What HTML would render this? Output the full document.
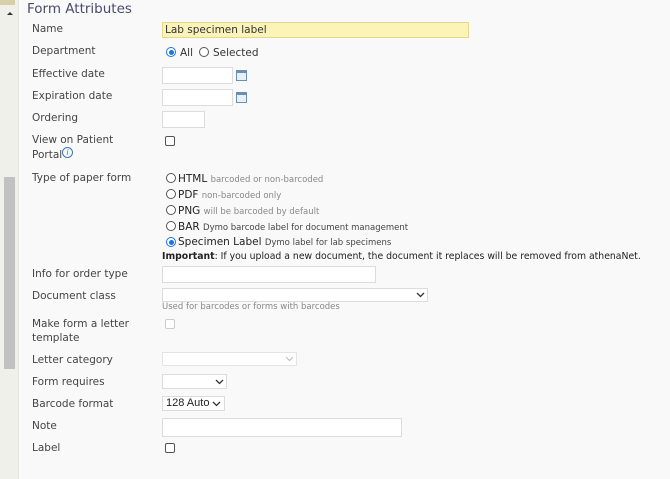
<!DOCTYPE html>
<html><head><style>
body{margin:0;width:670px;height:479px;background:#f9f9f9;overflow:hidden;position:relative;font-family:"DejaVu Sans","Liberation Sans",sans-serif;font-size:10.5px;color:#444;}
.a{position:absolute;white-space:nowrap;}
.strip{position:absolute;left:0;top:0;width:18px;height:479px;background:#f0f0ea;border-right:1px solid #e6e6e0;}
.inp{position:absolute;background:#fff;border:1px solid #dcdcdc;box-sizing:border-box;}
.rad{position:absolute;width:10px;height:10px;border:1px solid #555;border-radius:50%;background:#fff;box-sizing:border-box;}
.rad.on{border:1px solid #1a73e8;}
.rad.on:after{content:"";position:absolute;left:1.5px;top:1.5px;width:5px;height:5px;border-radius:50%;background:#1a73e8;}
.cb{position:absolute;width:10px;height:10px;border:1px solid #555;border-radius:2px;background:#fff;box-sizing:border-box;}
.sm{font-size:8.5px;color:#888;}
.sm2{font-size:8.5px;color:#444;}
.chev{position:absolute;width:9px;height:6px;}
.cal{position:absolute;width:11px;height:11px;border:1px solid #6a8fb0;box-sizing:border-box;background:#e8f0f7;}
.cal:before{content:"";position:absolute;left:0;right:0;top:0;height:2px;background:#6a8fb0;}
</style></head><body>
<div class="strip"></div>
<div class="a" style="left:0;top:0;width:15px;height:5px;background:#d8cfa8;"></div>
<div class="a" style="left:7px;top:12px;width:0;height:0;border-left:3px solid transparent;border-right:3px solid transparent;border-bottom:3px solid #333;"></div>
<div class="a" style="left:4px;top:177px;width:11px;height:192px;background:#c1c1c1;"></div>

<div class="a" style="left:27px;top:1px;font-size:13.5px;color:#4a4a6a;">Form Attributes</div>

<div class="a" style="left:32px;top:23px;">Name</div>
<div class="inp" style="left:162px;top:22px;width:307px;height:16px;background:#fbf3b8;border-color:#e2d98a;"></div>
<div class="a" style="left:165px;top:24px;color:#333;">Lab specimen label</div>

<div class="a" style="left:32px;top:45px;">Department</div>
<div class="rad on" style="left:166px;top:47px;"></div>
<div class="a" style="left:180px;top:47px;color:#333;">All</div>
<div class="rad" style="left:199px;top:47px;"></div>
<div class="a" style="left:213px;top:47px;color:#333;">Selected</div>

<div class="a" style="left:32px;top:68px;">Effective date</div>
<div class="inp" style="left:162px;top:67px;width:71px;height:17px;"></div>
<div class="cal" style="left:236px;top:70px;"></div>
<div class="a" style="left:32px;top:90px;">Expiration date</div>
<div class="inp" style="left:162px;top:89px;width:71px;height:17px;"></div>
<div class="cal" style="left:236px;top:92px;"></div>

<div class="a" style="left:32px;top:112px;">Ordering</div>
<div class="inp" style="left:162px;top:111px;width:43px;height:17px;"></div>

<div class="a" style="left:32px;top:134px;">View on Patient</div>
<div class="a" style="left:32px;top:149px;">Portal</div>
<div class="a" style="left:62px;top:147px;width:11px;height:11px;border:1px solid #3a7ab8;border-radius:50%;box-sizing:border-box;font-size:8px;color:#3a7ab8;text-align:center;line-height:10px;font-style:italic;">i</div>
<div class="cb" style="left:165px;top:136px;"></div>

<div class="a" style="left:32px;top:172px;">Type of paper form</div>
<div class="rad" style="left:166px;top:173px;"></div><div class="a" style="left:178px;top:173px;color:#222;">HTML <span class="sm">barcoded or non-barcoded</span></div>
<div class="rad" style="left:166px;top:189px;"></div><div class="a" style="left:178px;top:189px;color:#222;">PDF <span class="sm">non-barcoded only</span></div>
<div class="rad" style="left:166px;top:205px;"></div><div class="a" style="left:178px;top:205px;color:#222;">PNG <span class="sm">will be barcoded by default</span></div>
<div class="rad" style="left:166px;top:221px;"></div><div class="a" style="left:178px;top:221px;color:#222;">BAR <span class="sm2">Dymo barcode label for document management</span></div>
<div class="rad on" style="left:166px;top:237px;"></div><div class="a" style="left:178px;top:236px;color:#222;">Specimen Label <span class="sm2">Dymo label for lab specimens</span></div>
<div class="a" style="left:162px;top:251px;color:#222;font-size:9.3px;"><b>Important</b>: If you upload a new document, the document it replaces will be removed from athenaNet.</div>

<div class="a" style="left:32px;top:268px;">Info for order type</div>
<div class="inp" style="left:162px;top:266px;width:214px;height:17px;"></div>

<div class="a" style="left:32px;top:290px;">Document class</div>
<div class="inp" style="left:162px;top:288px;width:266px;height:14px;"></div>
<svg class="chev" style="left:416px;top:292px;" viewBox="0 0 9 6"><path d="M1 1l3.5 3.5L8 1" fill="none" stroke="#333" stroke-width="1.3"/></svg>
<div class="a" style="left:162px;top:302px;font-size:8.5px;color:#888;">Used for barcodes or forms with barcodes</div>

<div class="a" style="left:32px;top:318px;">Make form a letter</div>
<div class="a" style="left:32px;top:332px;">template</div>
<div class="cb" style="left:165px;top:319px;border-color:#ccc;"></div>

<div class="a" style="left:32px;top:354px;">Letter category</div>
<div class="inp" style="left:162px;top:352px;width:135px;height:14px;border-color:#e4e4e4;"></div>
<svg class="chev" style="left:285px;top:356px;" viewBox="0 0 9 6"><path d="M1 1l3.5 3.5L8 1" fill="none" stroke="#bbb" stroke-width="1"/></svg>

<div class="a" style="left:32px;top:376px;">Form requires</div>
<div class="inp" style="left:162px;top:374px;width:65px;height:15px;"></div>
<svg class="chev" style="left:215px;top:379px;" viewBox="0 0 9 6"><path d="M1 1l3.5 3.5L8 1" fill="none" stroke="#333" stroke-width="1.3"/></svg>

<div class="a" style="left:32px;top:398px;">Barcode format</div>
<div class="inp" style="left:162px;top:396px;width:63px;height:15px;"></div>
<div class="a" style="left:166px;top:397px;font-family:'Liberation Sans',sans-serif;font-size:11px;color:#222;">128 Auto</div>
<svg class="chev" style="left:212px;top:401px;" viewBox="0 0 9 6"><path d="M1 1l3.5 3.5L8 1" fill="none" stroke="#333" stroke-width="1.3"/></svg>

<div class="a" style="left:32px;top:420px;">Note</div>
<div class="inp" style="left:162px;top:418px;width:240px;height:19px;"></div>

<div class="a" style="left:32px;top:442px;">Label</div>
<div class="cb" style="left:165px;top:443px;"></div>
</body></html>
